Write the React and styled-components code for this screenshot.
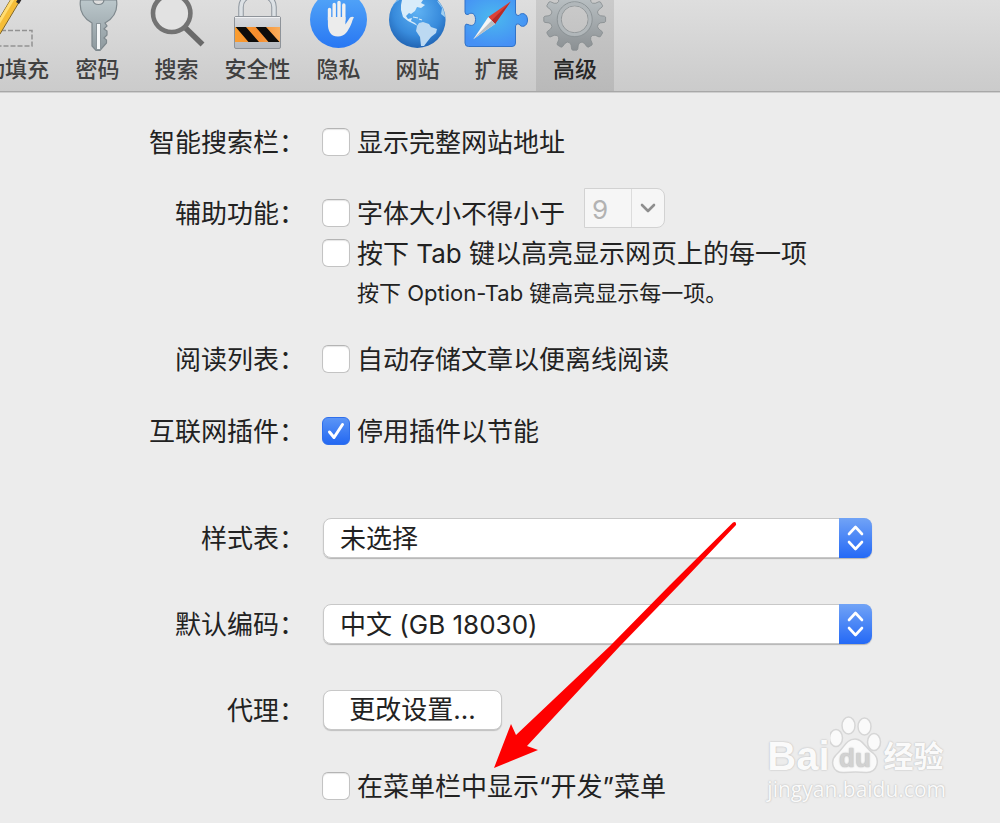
import { useState } from "react";
import styled, { createGlobalStyle } from "styled-components";

const GlobalStyle = createGlobalStyle`
	* {
		box-sizing: border-box;
	}
	body {
		margin: 0;
		background: #ececec;
		color: #222;
		font-family: Inter, "Noto Sans CJK SC", sans-serif;
		font-size: 26px;
	}
	button, input, select {
		font: inherit;
		color: inherit;
		margin: 0;
	}
`;

const Window = styled.div`
	position: relative;
	min-height: 100vh;
	overflow: hidden;
`;
const Toolbar = styled.nav`
	display: flex;
	height: 92px;
	margin-left: -48px;
	background: linear-gradient(#dedede, #cbcbcb);
	border-bottom: 1px solid #a8a8a8;
	box-shadow: 0 1px 0 #cfcfcf;
`;
const Tab = styled.button`
	display: flex;
	flex-direction: column;
	align-items: center;
	flex-shrink: 0;
	width: ${({ $width }) => $width}px;
	height: 91px;
	padding: 0;
	border: 0;
	background: ${({ $active }) =>
		$active ? "linear-gradient(#cacaca, #b9b9b9)" : "transparent"};
	color: ${({ $active }) => ($active ? "#262626" : "#404040")};
	font-size: 22px;
	font-weight: 500;
	line-height: 30px;
	svg {
		display: block;
		width: 100%;
		height: 54px;
	}
`;
const Form = styled.form`
	display: grid;
	grid-template-columns: 305px minmax(0, 1fr);
	column-gap: 17px;
	align-items: end;
	padding: 30px 128px 16px 0;
`;
const Title = styled.label`
	grid-column: 1;
	height: 40px;
	line-height: 42px;
	text-align: right;
	white-space: nowrap;
`;
const Line = styled.div`
	grid-column: 2;
	display: flex;
	align-items: flex-end;
	height: ${({ $height }) => $height || 40}px;
	margin-top: ${({ $gap }) => $gap || 0}px;
	white-space: nowrap;
`;
const Option = styled.label`
	display: flex;
	align-items: center;
	gap: 7px;
	height: 40px;
	line-height: 38px;
	> span:last-child {
		padding-top: 2px;
	}
`;
const Tick = styled.input`
	appearance: none;
	flex-shrink: 0;
	width: 28px;
	height: 28px;
	border: 1px solid #c3c3c3;
	border-top-color: #b4b4b4;
	border-radius: 6px;
	background: #fff;
	box-shadow: inset 0 1px 1px #e6e6e6;
	&:checked {
		border-color: #2f6fec;
		box-shadow: none;
		background: linear-gradient(#5b95f6, #2368f2);
	}
`;
const TickWrapper = styled.span`
	display: grid;
	> * {
		grid-area: 1 / 1;
	}
	svg {
		width: 28px;
		height: 28px;
		pointer-events: none;
	}
`;
const Note = styled.p`
	margin: 0;
	padding-left: 35px;
	font-size: 22px;
	line-height: 40px;
`;
const Combo = styled.div`
	display: flex;
	align-self: flex-start;
	width: 81px;
	height: 40px;
	margin-left: 19px;
	border: 1px solid #d2d2d2;
	border-radius: 0 8px 8px 0;
	background: #f6f6f6;
	overflow: hidden;
	input {
		width: 46px;
		padding: 2px 0 0 7px;
		border: 0;
		background: transparent;
		color: #b2b2b2;
	}
	button {
		flex: 1;
		display: grid;
		place-items: center;
		padding: 0;
		border: 0;
		border-left: 1px solid #dcdcdc;
		background: transparent;
	}
`;
const SelectWrapper = styled.div`
	display: flex;
	position: relative;
	flex: 1;
	height: 40px;
	margin-left: 1px;
	border-radius: 8px;
	box-shadow: 0 1px 1px #b4b4b4;
	select {
		appearance: none;
		width: 100%;
		padding: 0 40px 0 16px;
		border: 1px solid #c8c8c8;
		border-radius: 8px;
		background: #fff;
	}
`;
const Stepper = styled.span`
	position: absolute;
	top: 0;
	right: 0;
	display: grid;
	place-items: center;
	width: 33px;
	height: 40px;
	border-radius: 0 8px 8px 0;
	background: linear-gradient(#71a3f6, #2469f6);
	pointer-events: none;
`;
const PushButton = styled.button`
	width: 179px;
	height: 40px;
	margin-left: 1px;
	padding: 0;
	border: 1px solid #c8c8c8;
	border-radius: 8px;
	background: #fff;
	box-shadow: 0 1px 1px #c0c0c0;
	line-height: 38px;
`;
const Arrow = styled.svg`
	position: absolute;
	left: 490px;
	top: 516px;
	width: 250px;
	height: 256px;
	pointer-events: none;
`;
const Watermark = styled.div`
	position: absolute;
	right: 54px;
	bottom: 21px;
	color: #fafafa;
	text-shadow: 0 0 2px #bbb, 0 0 1px #ccc;
	pointer-events: none;
`;
const Brand = styled.div`
	display: flex;
	align-items: flex-end;
	height: 60px;
	font-weight: 700;
	line-height: 40px;
`;
const BrandLatin = styled.span`
	font-family: "Liberation Sans", sans-serif;
	font-size: 40px;
`;
const BrandChinese = styled.span`
	font-size: 30px;
`;
const Site = styled.div`
	font-family: "Open Sans", sans-serif;
	font-size: 21px;
	line-height: 26px;
`;

const gearPath = (cx, cy) => {
	const pts = [];
	const shape = [
		[-12, 24],
		[-8, 26],
		[-6, 30],
		[-4, 31],
		[4, 31],
		[6, 30],
		[8, 26],
		[12, 24],
	];
	for (let i = 0; i < 12; i++) {
		shape.forEach(([deg, r]) => {
			const a = ((i * 30 + deg) * Math.PI) / 180;
			pts.push(`${(cx + r * Math.sin(a)).toFixed(1)} ${(cy + r * Math.cos(a)).toFixed(1)}`);
		});
	}
	return `M${pts.join("L")}Z`;
};

const AutofillIcon = () => (
	<svg viewBox="-48 0 106 54">
		<path d="M-20 30.500H32V46H-20" fill="none" stroke="#929292" strokeWidth="1.500" strokeDasharray="5 2" />
		<path d="M21 -1L0 34L-8 43L-7 29L11 -1Z" fill="#f5bd38" stroke="#80662a" strokeWidth="1" />
		<path d="M13 -1L-5 29" stroke="#ffdc72" strokeWidth="3" />
		<path d="M18 -1H22L19 4L16 2Z" fill="#302c2c" />
	</svg>
);
const KeyIcon = () => (
	<svg viewBox="58 0 79 54">
		<defs>
			<linearGradient id="key" x1="0" y1="0" x2="0" y2="1">
				<stop offset="0" stopColor="#bbc7cb" />
				<stop offset="1" stopColor="#8e999e" />
			</linearGradient>
		</defs>
		<path
			fillRule="evenodd"
			d="M80.500 0C79 10 83 18 92 23V46L96 50.500H100L106.500 43V40L104 38L107 35V31L104 29L107 26L105 23C114 18 118 10 116.500 0ZM93 0C93.500 6 103.500 6 104 0Z"
			fill="url(#key)"
			stroke="#7e888d"
			strokeWidth="1.200"
		/>
		<path d="M98.500 23V50" stroke="#8a9499" strokeWidth="5" />
		<path d="M98.500 24V49" stroke="#f4f6f7" strokeWidth="3" />
	</svg>
);
const SearchIcon = () => (
	<svg viewBox="137 0 79 54">
		<path d="M184.500 27L202.500 44.500" stroke="#696969" strokeWidth="5.500" />
		<circle cx="171.700" cy="13.300" r="18.700" fill="#e2e2e2" stroke="#737373" strokeWidth="4.600" />
	</svg>
);
const LockIcon = () => (
	<svg viewBox="216 0 83 54">
		<defs>
			<linearGradient id="lock" x1="0" y1="0" x2="0" y2="1">
				<stop offset="0" stopColor="#d8dade" />
				<stop offset="1" stopColor="#b4b8be" />
			</linearGradient>
			<linearGradient id="band">
				<stop offset="0" stopColor="#fa9e31" />
				<stop offset="0.500" stopColor="#f58c2d" />
				<stop offset="1" stopColor="#f9ad5c" />
			</linearGradient>
		</defs>
		<path d="M241 17V7C241 -10 274 -10 274 7V17" fill="none" stroke="#8e969e" strokeWidth="5.500" />
		<path d="M241 17V7C241 -10 274 -10 274 7V17" fill="none" stroke="#dce1e5" strokeWidth="3.500" />
		<rect x="234.500" y="16.500" width="46" height="32" rx="1.500" fill="url(#lock)" stroke="#8e9399" />
		<path d="M235 17.500H280" stroke="#f0f1f3" />
		<path d="M235 27H280V42H235Z" fill="url(#band)" />
		<path d="M235.700 27H246L259 42H248.500ZM255.700 27H266L279.500 42H268.500Z" fill="#0c0c0c" />
	</svg>
);
const HandIcon = () => (
	<svg viewBox="299 0 79 54">
		<defs>
			<linearGradient id="hand" x1="0" y1="0" x2="0" y2="1">
				<stop offset="0" stopColor="#56a9f8" />
				<stop offset="1" stopColor="#2877f3" />
			</linearGradient>
		</defs>
		<circle cx="338.500" cy="19.500" r="28.500" fill="url(#hand)" />
		<path
			d="M329.500 20V9.500M334.200 20V4.500M339 20V2.500M343.800 20V5"
			stroke="#f1f1f1"
			strokeWidth="3.400"
			strokeLinecap="round"
		/>
		<path
			d="M327.900 17H345.400V24.500L349 19C350 17 352.500 16 354 17.500C352.500 19 352.500 21 351 24.500C348 31 345 36.500 338 36.500C330 36.500 327.900 30 327.900 24Z"
			fill="#ececec"
		/>
	</svg>
);
const GlobeIcon = () => (
	<svg viewBox="378 0 79 54">
		<defs>
			<radialGradient id="globe" cx="0.500" cy="0.350" r="0.700">
				<stop offset="0" stopColor="#5fb2f3" />
				<stop offset="0.600" stopColor="#388bdc" />
				<stop offset="1" stopColor="#1c5cab" />
			</radialGradient>
			<clipPath id="earth">
				<circle cx="417.300" cy="19.700" r="28" />
			</clipPath>
		</defs>
		<circle cx="417.300" cy="19.700" r="28.300" fill="url(#globe)" />
		<g clipPath="url(#earth)">
			<path
				d="M402 0H423L421 3L425 5L421 8L417 7L415 11L411 14L409 13L406 16L408 19L412 18L411 21L415 23L418 26L414 24L408 21L403 17L401 10L401 5Z"
				fill="#d8ecfa"
			/>
			<path
				d="M419 23L423 22L429 24L431 27L437 29L436 33L431 37L427 42L424 46L421 46L420 37L416 31L417 26Z"
				fill="#bcd9f2"
			/>
			<path d="M437 1L446 3V18L441 14L442 8Z" fill="#a1cff0" />
			<path d="M413 17L418 18M419 19L422 20" stroke="#d8ecfa" strokeWidth="1.200" />
			<path d="M391 8C394 3 397 1 400 -1" stroke="#8dcbf7" fill="none" />
		</g>
	</svg>
);
const PuzzleIcon = () => (
	<svg viewBox="457 0 79 54">
		<defs>
			<radialGradient id="puzzle" cx="0.450" cy="0.400" r="0.600">
				<stop offset="0" stopColor="#4bb9ee" />
				<stop offset="1" stopColor="#4590f5" />
			</radialGradient>
		</defs>
		<path
			d="M465 -2H515.500V13Q516 16 519 15.500C521 12 527.500 13 527.500 20C527.500 27 521 28 519 24Q516 23 515.500 26V43Q515.500 46.500 512 46.500H468.500Q465 46.500 465 43V26Q465.500 23 468 24.500C473 27 475.500 24 475.500 19.500C475.500 14 472 11.500 468 14.500Q465 15 465 12Z"
			fill="url(#puzzle)"
			stroke="#3273c7"
		/>
		<path d="M510.700 1.500L488.300 17L495 24Z" fill="#dc4137" />
		<path d="M510.700 1.500L491.600 20.500L495 24Z" fill="#b62b27" />
		<path d="M473.300 39.300L488.300 17L495 24Z" fill="#f5f5f5" />
		<path d="M473.300 39.300L491.600 20.500L495 24Z" fill="#b8bec3" />
	</svg>
);
const GearIcon = () => (
	<svg viewBox="536 0 78 54">
		<defs>
			<linearGradient id="gear" x1="0" y1="0" x2="0" y2="1">
				<stop offset="0" stopColor="#c2c9cc" />
				<stop offset="1" stopColor="#8b9093" />
			</linearGradient>
		</defs>
		<path
			fillRule="evenodd"
			d={`${gearPath(574.7, 19.3)}M588.200 19.300A13.500 13.500 0 1 0 561.200 19.300A13.500 13.500 0 1 0 588.200 19.300Z`}
			fill="url(#gear)"
			stroke="#858b8e"
			strokeWidth="0.800"
		/>
		<circle cx="574.700" cy="19.300" r="17.500" fill="none" stroke="#8d9497" />
		<circle cx="574.700" cy="19.300" r="15.300" fill="none" stroke="#b1b7ba" strokeWidth="3" />
	</svg>
);

const tabs = [
	{ title: "自动填充", width: 106, icon: <AutofillIcon /> },
	{ title: "密码", width: 79, icon: <KeyIcon /> },
	{ title: "搜索", width: 79, icon: <SearchIcon /> },
	{ title: "安全性", width: 83, icon: <LockIcon /> },
	{ title: "隐私", width: 79, icon: <HandIcon /> },
	{ title: "网站", width: 79, icon: <GlobeIcon /> },
	{ title: "扩展", width: 79, icon: <PuzzleIcon /> },
	{ title: "高级", width: 78, icon: <GearIcon /> },
];

const CheckOption = ({ id, children, checked = false }) => {
	const [on, setOn] = useState(checked);
	return (
		<Option htmlFor={id}>
			<TickWrapper>
				<Tick id={id} type="checkbox" checked={on} onChange={() => setOn(!on)} />
				{on && (
					<svg viewBox="0 0 28 28">
						<path
							d="M7.500 15L12 20.500L20.500 7.500"
							fill="none"
							stroke="#fff"
							strokeWidth="3"
							strokeLinecap="round"
							strokeLinejoin="round"
						/>
					</svg>
				)}
			</TickWrapper>
			<span>{children}</span>
		</Option>
	);
};

const Popup = ({ id, value }) => (
	<SelectWrapper>
		<select id={id} defaultValue={value}>
			<option>{value}</option>
		</select>
		<Stepper>
			<svg width="17" height="26" viewBox="0 0 17 26">
				<path
					d="M2 9L8.500 2L15 9M2 17L8.500 24L15 17"
					fill="none"
					stroke="#fff"
					strokeWidth="2.600"
					strokeLinecap="round"
					strokeLinejoin="round"
				/>
			</svg>
		</Stepper>
	</SelectWrapper>
);

const App = () => {
	const [active, setActive] = useState("高级");
	return (
		<Window lang="zh-CN">
			<GlobalStyle />
			<Toolbar>
				{tabs.map((item) => (
					<Tab
						key={item.title}
						$width={item.width}
						$active={item.title === active}
						onClick={() => setActive(item.title)}
					>
						{item.icon}
						{item.title}
					</Tab>
				))}
			</Toolbar>
			<Form>
				<Title htmlFor="address">智能搜索栏：</Title>
				<Line>
					<CheckOption id="address">显示完整网站地址</CheckOption>
				</Line>

				<Title htmlFor="min-size">辅助功能：</Title>
				<Line $gap={26} $height={45}>
					<CheckOption id="min-size">字体大小不得小于</CheckOption>
					<Combo>
						<input aria-label="字体大小" defaultValue="9" disabled />
						<button type="button" aria-label="选择字体大小" disabled>
							<svg width="16" height="10" viewBox="0 0 16 10">
								<path
									d="M2 2L8 8L14 2"
									fill="none"
									stroke="#8e8e8e"
									strokeWidth="2.600"
									strokeLinecap="round"
									strokeLinejoin="round"
								/>
							</svg>
						</button>
					</Combo>
				</Line>
				<Line>
					<CheckOption id="tab-key">按下 Tab 键以高亮显示网页上的每一项</CheckOption>
				</Line>
				<Line>
					<Note>按下 Option-Tab 键高亮显示每一项。</Note>
				</Line>

				<Title htmlFor="reading">阅读列表：</Title>
				<Line $gap={26}>
					<CheckOption id="reading">自动存储文章以便离线阅读</CheckOption>
				</Line>

				<Title htmlFor="plugins">互联网插件：</Title>
				<Line $gap={32}>
					<CheckOption id="plugins" checked>
						停用插件以节能
					</CheckOption>
				</Line>

				<Title htmlFor="stylesheet">样式表：</Title>
				<Line $gap={67}>
					<Popup id="stylesheet" value="未选择" />
				</Line>

				<Title htmlFor="encoding">默认编码：</Title>
				<Line $gap={46}>
					<Popup id="encoding" value="中文 (GB 18030)" />
				</Line>

				<Title htmlFor="proxy">代理：</Title>
				<Line $gap={46}>
					<PushButton id="proxy" type="button">
						更改设置...
					</PushButton>
				</Line>
				<Line $gap={36}>
					<CheckOption id="develop">在菜单栏中显示“开发”菜单</CheckOption>
				</Line>
			</Form>
			<Arrow viewBox="490 516 250 256">
				<path
					d="M733 522.500Q736.500 521 736 525L682 582L620 646L527 746L538 750L494 768L511 724L516 735L610 646L670 585Z"
					fill="#fe0000"
				/>
			</Arrow>
			<Watermark>
				<Brand>
					<BrandLatin>Bai</BrandLatin>
					<svg width="54" height="60" viewBox="829 716 54 60">
						<g fill="#fafafa" stroke="#d6d6d6" strokeWidth="1.500">
							<ellipse cx="835" cy="738" rx="6.500" ry="8.500" />
							<ellipse cx="847.500" cy="725.500" rx="6.500" ry="8.500" />
							<ellipse cx="863.500" cy="726.500" rx="6.500" ry="8.500" />
							<ellipse cx="873" cy="742" rx="6.500" ry="8.500" />
							<path d="M854 739C862 739 864 748 872 753C880 760 876 773 865 772.500C860 772 849 772 843 772.500C831 773 829 761 835 755C843 748 845 739 854 739Z" />
						</g>
						<text x="838" y="767" fontSize="26" fontFamily="Liberation Sans" fill="#d2d2d2">
							du
						</text>
					</svg>
					<BrandChinese>经验</BrandChinese>
				</Brand>
				<Site>jingyan.baidu.com</Site>
			</Watermark>
		</Window>
	);
};

export default App;
